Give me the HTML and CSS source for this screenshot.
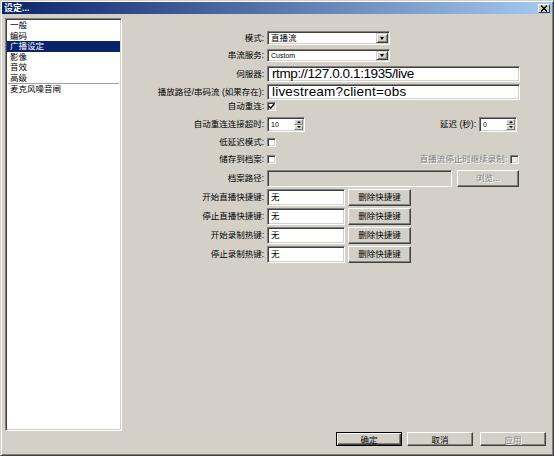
FILE: index.html
```html
<!DOCTYPE html>
<html lang="zh">
<head>
<meta charset="utf-8">
<title>设定</title>
<link rel="stylesheet" href="styles.css">
</head>
<body>
<div class="window">
  <div class="titlebar">
    <span class="title">设定...</span>
    <span class="close"><svg width="8" height="7" viewBox="0 0 8 7"><path d="M1 0.5 L7 6.5 M7 0.5 L1 6.5" stroke="#000" stroke-width="1.4"/></svg></span>
  </div>
  <div class="body">
    <div class="sidebar">
      <div class="item">一般</div>
      <div class="item">编码</div>
      <div class="item selected">广播设定</div>
      <div class="item">影像</div>
      <div class="item">音效</div>
      <div class="item">高级</div>
      <div class="sep"></div>
      <div class="item">麦克风噪音闸</div>
    </div>
    <div class="main">
      <div class="form">
        <div class="row r1">
          <span class="lbl">模式:</span>
          <div class="select"><span class="val">直播流</span><span class="arrow"><i class="tri"></i></span></div>
        </div>
        <div class="row r2">
          <span class="lbl">串流服务:</span>
          <div class="select"><span class="val latin">Custom</span><span class="arrow"><i class="tri"></i></span></div>
        </div>
        <div class="row r3">
          <span class="lbl">伺服器:</span>
          <div class="field wide"><span class="big tight">rtmp://127.0.0.1:1935/live</span></div>
        </div>
        <div class="row r4">
          <span class="lbl">播放路径/串码流 (如果存在):</span>
          <div class="field wide"><span class="big loose">livestream?client=obs</span></div>
        </div>
        <div class="row r5">
          <span class="lbl">自动重连:</span>
          <span class="check"><svg width="7" height="7" viewBox="0 0 7 7"><path d="M1 3.2 L2.7 5.2 L6.2 1" fill="none" stroke="#000" stroke-width="1.3"/></svg></span>
        </div>
        <div class="row r6">
          <span class="lbl">自动重连连接超时:</span>
          <div class="spin"><span class="val latin">10</span><span class="spinbtns"><span class="sb"><i class="tri up"></i></span><span class="sb"><i class="tri"></i></span></span></div>
          <span class="rlbl">延迟 (秒):</span>
          <div class="spin right"><span class="val latin">0</span><span class="spinbtns"><span class="sb"><i class="tri up"></i></span><span class="sb"><i class="tri"></i></span></span></div>
        </div>
        <div class="row r7">
          <span class="lbl">低延迟模式:</span>
          <span class="check"></span>
        </div>
        <div class="row r8">
          <span class="lbl">储存到档案:</span>
          <span class="check"></span>
          <span class="rlbl disabled">直播流停止时继续录制:</span>
          <span class="check dis right1"></span>
        </div>
        <div class="row r9">
          <span class="lbl">档案路径:</span>
          <div class="field path disabledfield"></div>
          <span class="btn browse disabled">浏览...</span>
        </div>
        <div class="row hk">
          <span class="lbl">开始直播快捷键:</span>
          <div class="field hkfield"><span class="val">无</span></div>
          <span class="btn hkbtn">删除快捷键</span>
        </div>
        <div class="row hk">
          <span class="lbl">停止直播快捷键:</span>
          <div class="field hkfield"><span class="val">无</span></div>
          <span class="btn hkbtn">删除快捷键</span>
        </div>
        <div class="row hk">
          <span class="lbl">开始录制热键:</span>
          <div class="field hkfield"><span class="val">无</span></div>
          <span class="btn hkbtn">删除快捷键</span>
        </div>
        <div class="row hk">
          <span class="lbl">停止录制热键:</span>
          <div class="field hkfield"><span class="val">无</span></div>
          <span class="btn hkbtn">删除快捷键</span>
        </div>
      </div>
      <div class="buttons">
        <span class="btn dlg default">确定</span>
        <span class="btn dlg cancel">取消</span>
        <span class="btn dlg apply disabled">应用</span>
      </div>
    </div>
  </div>
</div>
</body>
</html>
```

FILE: styles.css
```css
* { box-sizing: border-box; }
html, body { margin: 0; padding: 0; background: #d4d0c8; }
body {
  font-family: "Liberation Sans", "Noto Sans CJK SC", sans-serif;
  font-size: 8.5px;
  color: #000;
}
.window {
  width: 554px;
  height: 456px;
  background: #d4d0c8;
  border: 1px solid;
  border-color: #d4d0c8 #404040 #404040 #d4d0c8;
  box-shadow: inset 1px 1px #fff, inset -1px -1px #808080;
  padding: 1px;
  display: flex;
  flex-direction: column;
}
.titlebar {
  height: 12px;
  background: linear-gradient(to right, #0a246a, #a6caf0);
  display: flex;
  align-items: center;
  justify-content: space-between;
  padding: 0 2px 0 2px;
}
.title {
  color: #fff;
  font-weight: bold;
  font-size: 9px;
  line-height: 1;
}
.close {
  width: 12px;
  height: 9px;
  background: #d4d0c8;
  border: 1px solid;
  border-color: #fff #404040 #404040 #fff;
  display: flex;
  align-items: center;
  justify-content: center;
}
.body {
  flex: 1;
  display: flex;
}
.sidebar {
  width: 117px;
  height: 413px;
  margin: 4px 0 0 3px;
  background: #fff;
  border: 1px solid;
  border-color: #808080 #fff #fff #808080;
  box-shadow: inset 1px 1px #404040, inset -1px -1px #d4d0c8;
  padding: 1px;
}
.item {
  height: 10.5px;
  line-height: 10.5px;
  padding-left: 3px;
  white-space: nowrap;
}
.item.selected {
  background: #0a246a;
  color: #fff;
}
.sep {
  height: 1px;
  background: #a0a0a0;
  margin: 0 1px;
}
.main {
  flex: 1;
  display: flex;
  flex-direction: column;
  padding-top: 17px;
}
.form {
  width: 398px;
  display: flex;
  flex-direction: column;
}
.row {
  display: flex;
  align-items: center;
  line-height: 1;
}
.r1 { height: 14px; }
.r2 { height: 13px; margin-top: 4px; }
.r3 { height: 16px; margin-top: 4px; }
.r4 { height: 16px; margin-top: 2px; }
.r5 { height: 9px; margin-top: 2px; }
.r6 { height: 15px; margin-top: 6px; }
.r7 { height: 9px; margin-top: 6px; }
.r8 { height: 9px; margin-top: 8px; }
.r9 { height: 17px; margin-top: 6px; }
.hk { height: 17px; margin-top: 2px; }

.lbl {
  width: 145px;
  padding-right: 3px;
  text-align: right;
  white-space: nowrap;
  flex: none;
}
.rlbl {
  margin-left: auto;
  padding-right: 3px;
  white-space: nowrap;
}
.disabled {
  color: #808080;
  text-shadow: 1px 1px #fff;
}
.select, .field, .spin, .check {
  background: #fff;
  border: 1px solid;
  border-color: #808080 #fff #fff #808080;
  box-shadow: inset 1px 1px #404040, inset -1px -1px #d4d0c8;
  flex: none;
}
.select {
  width: 123px;
  height: 100%;
  display: flex;
  align-items: center;
  padding: 1px;
}
.select .val {
  flex: 1;
  padding-left: 2px;
}
.latin {
  font-size: 7px;
}
.arrow {
  width: 12px;
  height: 100%;
  background: #d4d0c8;
  border: 1px solid;
  border-color: #d4d0c8 #404040 #404040 #d4d0c8;
  box-shadow: inset 1px 1px #fff, inset -1px -1px #808080;
  display: flex;
  align-items: center;
  justify-content: center;
}
.tri {
  width: 0;
  height: 0;
  border-left: 2.5px solid transparent;
  border-right: 2.5px solid transparent;
  border-top: 3px solid #000;
}
.tri.up {
  border-top: 0;
  border-bottom: 3px solid #000;
}
.field {
  height: 100%;
  display: flex;
  align-items: center;
  padding: 0 3px;
  overflow: hidden;
}
.wide { width: 253px; }
.big {
  font-family: "Liberation Sans", sans-serif;
  font-size: 13.5px;
  white-space: nowrap;
  padding-left: 1px;
}
.tight { letter-spacing: -0.4px; }
.loose { letter-spacing: 0.2px; }
.check {
  width: 9px;
  height: 9px;
  display: flex;
  align-items: center;
  justify-content: center;
}
.check.dis { background: #ece9e4; }
.right1 { margin-right: 1px; }
.spin {
  width: 38px;
  height: 100%;
  display: flex;
  padding: 1px;
}
.spin.right { margin-right: 3px; }
.spin .val {
  flex: 1;
  padding-left: 2px;
  display: flex;
  align-items: center;
}
.spinbtns {
  width: 9px;
  display: flex;
  flex-direction: column;
}
.sb {
  flex: 1;
  background: #d4d0c8;
  border: 1px solid;
  border-color: #fff #808080 #808080 #fff;
  display: flex;
  align-items: center;
  justify-content: center;
}
.sb .tri {
  border-left-width: 2px;
  border-right-width: 2px;
  border-top-width: 2px;
}
.sb .tri.up {
  border-top-width: 0;
  border-bottom-width: 2px;
}
.path { width: 185px; }
.disabledfield { background: #d4d0c8; }
.btn {
  background: #d4d0c8;
  border: 1px solid;
  border-color: #fff #404040 #404040 #fff;
  box-shadow: inset -1px -1px #808080;
  display: flex;
  align-items: center;
  justify-content: center;
  white-space: nowrap;
  flex: none;
  height: 100%;
}
.browse {
  width: 62px;
  margin-left: 5px;
}
.hkfield { width: 78px; }
.hkbtn {
  width: 63px;
  margin-left: 3px;
}
.buttons {
  margin-top: auto;
  display: flex;
  justify-content: flex-end;
  padding: 0 6px 8px 0;
}
.dlg {
  width: 66px;
  height: 14px;
}
.default {
  border: 1px solid #000;
  box-shadow: inset 1px 1px #fff, inset -1px -1px #404040, inset -2px -2px #808080;
}
.cancel { margin-left: 5px; }
.apply { margin-left: 7px; }
```
